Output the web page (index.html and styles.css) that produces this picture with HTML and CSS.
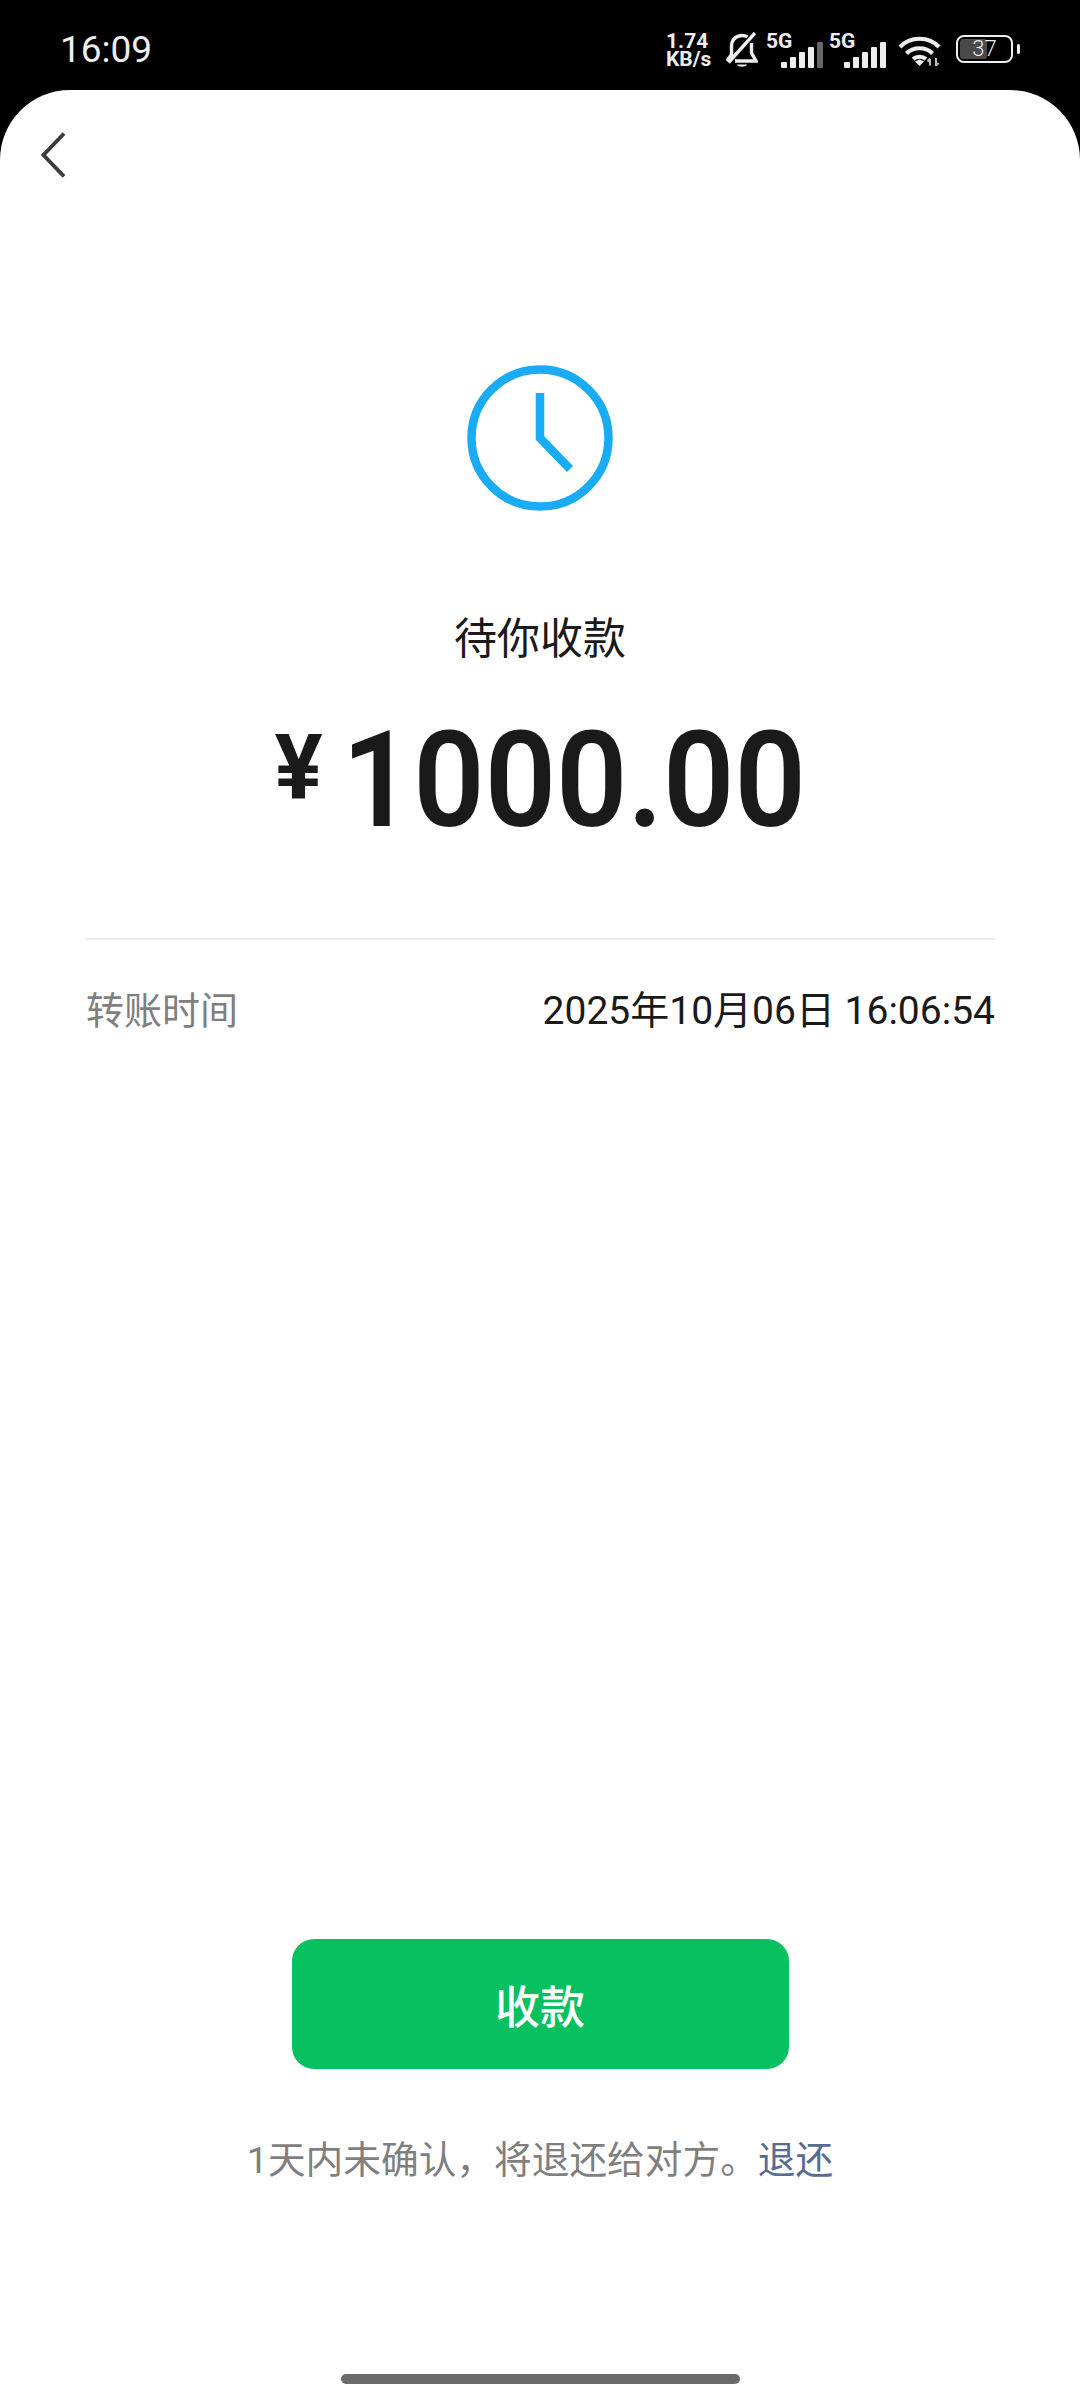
FILE: index.html
```html
<!DOCTYPE html>
<html lang="zh-CN">
<head>
    <meta charset="UTF-8">
    <meta name="viewport" content="width=device-width, initial-scale=1.0">
    <title>待你收款</title>
    <link rel="stylesheet" href="styles.css">
</head>
<body>
    <div class="status-bar">
        <span class="time">16:09</span>
        <div class="status-icons">
            <div class="speed">1.74<br>KB/s</div>
            <svg class="bell" viewBox="0 0 33 36" width="33" height="36" fill="none" stroke="#eee" stroke-width="3.4">
                <path d="M2 29 L6.5 22.5 V14 C6.5 8 11 3.5 17 3.5 C19 3.5 21 4 22.5 5"/>
                <path d="M26.5 11 V21 L31 29 H10"/>
                <path d="M3.5 30.5 L30 1"/>
                <path d="M12 32.5 H22 C21 35.5 13 35.5 12 32.5 Z" fill="#eee" stroke="none"/>
            </svg>
            <div class="sim">
                <span class="sim-label">5G</span>
                <div class="bars">
                    <i class="bar b1"></i><i class="bar b2"></i><i class="bar b3"></i><i class="bar b4"></i><i class="bar b5 dim"></i>
                </div>
            </div>
            <div class="sim">
                <span class="sim-label">5G</span>
                <div class="bars">
                    <i class="bar b1"></i><i class="bar b2"></i><i class="bar b3"></i><i class="bar b4"></i><i class="bar b5"></i>
                </div>
            </div>
            <svg class="wifi" viewBox="0 0 43 30" width="43" height="30" fill="none" stroke="#eee" stroke-width="4.2">
                <path d="M2 11 C12 0 31 0 41 11"/>
                <path d="M8.5 17.5 C15 10.5 28 10.5 34.5 17.5"/>
                <path d="M15 23 C18.5 20 24.5 20 28 23"/>
                <path d="M17 25.5 L21.5 23.5 L26 25.5 L21.5 30 Z" fill="#eee" stroke="none"/>
                <path d="M32 29.5 V23 M29.5 25.5 L32 22.5 M38 22 V29.5 L40.5 27" stroke-width="2" stroke="#bbb"/>
            </svg>
            <div class="battery-wrap">
                <div class="battery">
                    <div class="battery-fill"></div>
                    <span class="battery-num">37</span>
                </div>
                <div class="battery-nub"></div>
            </div>
        </div>
    </div>

    <div class="panel">
        <svg class="back" viewBox="0 0 24 46" width="24" height="46" fill="none" stroke="#3c3c3c" stroke-width="3.8">
            <path d="M23 1.5 L2.5 23 L23 44.5"/>
        </svg>

        <div class="summary">
            <svg class="clock" viewBox="0 0 146 146" width="146" height="146" fill="none" stroke="#1aabf5" stroke-width="8.5">
                <circle cx="73" cy="73" r="68.5"/>
                <path d="M73 28 V73 L103 104"/>
            </svg>
            <div class="state">待你收款</div>
            <div class="amount">
                <span class="yen">¥</span>
                <span class="value">1000.00</span>
            </div>
        </div>

        <div class="info">
            <div class="info-row">
                <span class="info-label">转账时间</span>
                <span class="info-value">2025年10月06日 16:06:54</span>
            </div>
        </div>

        <div class="actions">
            <button class="accept">收款</button>
            <p class="note">1天内未确认，将退还给对方。<a class="refund">退还</a></p>
        </div>

        <div class="home-bar"></div>
    </div>
</body>
</html>
```
FILE: styles.css
```css
* {
    box-sizing: border-box;
}

body {
    margin: 0;
    width: 1080px;
    height: 2400px;
    display: flex;
    flex-direction: column;
    overflow: hidden;
    background: #000;
    font-family: Roboto, "Noto Sans CJK SC", sans-serif;
}

/* status bar */
.status-bar {
    height: 90px;
    display: flex;
    justify-content: space-between;
    padding: 0 60px 0 60px;
    color: #eee;
}

.time {
    font-size: 37px;
    line-height: 38px;
    margin-top: 31px;
}

.status-icons {
    display: flex;
    align-items: flex-start;
    padding-top: 32px;
}

.speed {
    font-size: 21px;
    font-weight: 700;
    line-height: 18px;
    width: 59px;
}

.bell {
    margin-right: 8px;
}

.sim {
    width: 63px;
    height: 36px;
    display: flex;
    flex-direction: column;
}

.sim-label {
    font-size: 21px;
    font-weight: 700;
    line-height: 18px;
}

.bars {
    display: flex;
    align-items: flex-end;
    gap: 3.5px;
    height: 26px;
    margin-top: -8px;
    padding-left: 15px;
}

.bar {
    width: 5.5px;
    background: #eee;
    border-radius: 1px;
}

.b1 { height: 6px; }
.b2 { height: 11px; }
.b3 { height: 16px; }
.b4 { height: 21px; }
.b5 { height: 26px; }

.dim {
    background: #666;
}

.sim + .sim {
    width: 69px;
}

.wifi {
    margin-top: 4px;
    margin-right: 15px;
}

.battery-wrap {
    display: flex;
    align-items: center;
    gap: 4px;
    margin-top: 3px;
}

.battery {
    position: relative;
    width: 57px;
    height: 28px;
    border: 2.5px solid #eee;
    border-radius: 8px;
    display: flex;
    align-items: center;
    justify-content: center;
}

.battery-fill {
    position: absolute;
    left: 2px;
    top: 2px;
    bottom: 2px;
    width: 27px;
    background: #4a4a4a;
    border-radius: 3px;
}

.battery-num {
    position: relative;
    font-size: 22px;
    font-weight: 300;
    line-height: 22px;
}

.battery-nub {
    width: 3px;
    height: 10px;
    background: #eee;
    border-radius: 2px;
}

/* main panel */
.panel {
    flex: 1;
    display: flex;
    flex-direction: column;
    background: #fff;
    border-radius: 70px 70px 0 0;
    padding-top: 42px;
}

.back {
    margin-left: 41px;
    flex-shrink: 0;
}

.summary {
    display: flex;
    flex-direction: column;
    align-items: center;
    margin-top: 187px;
}

.state {
    margin-top: 98px;
    font-size: 43px;
    line-height: 60px;
    color: #1a1a1a;
}

.amount {
    display: flex;
    align-items: flex-start;
    margin-top: 47px;
    color: #1a1a1a;
    font-weight: 600;
}

.yen {
    font-size: 90px;
    line-height: 90px;
    font-weight: 700;
    margin-top: 8px;
    margin-right: 19px;
}

.value {
    font-size: 133px;
    line-height: 130px;
    margin: 0 -15px;
    transform: scaleX(0.94);
}

.info {
    margin: 92px 85px 0 86px;
    border-top: 2px solid #ebebeb;
    padding-top: 41px;
}

.info-row {
    display: flex;
    justify-content: space-between;
    align-items: center;
    line-height: 60px;
}

.info-label {
    font-size: 38px;
    color: #7f7f7f;
}

.info-value {
    font-size: 39px;
    color: #1a1a1a;
}

.actions {
    margin-top: auto;
    display: flex;
    flex-direction: column;
    align-items: center;
}

.accept {
    width: 497px;
    height: 130px;
    border: none;
    border-radius: 22px;
    background: #07c160;
    color: #fff;
    font-family: inherit;
    font-size: 45px;
    font-weight: 500;
}

.note {
    margin: 61px 0 0;
    font-size: 37.7px;
    line-height: 60px;
    color: #7f7f7f;
}

.refund {
    color: #576b95;
}

.home-bar {
    width: 399px;
    height: 10px;
    margin: 184px auto 16px;
    background: #6b6b6b;
    border-radius: 5px;
}
```
